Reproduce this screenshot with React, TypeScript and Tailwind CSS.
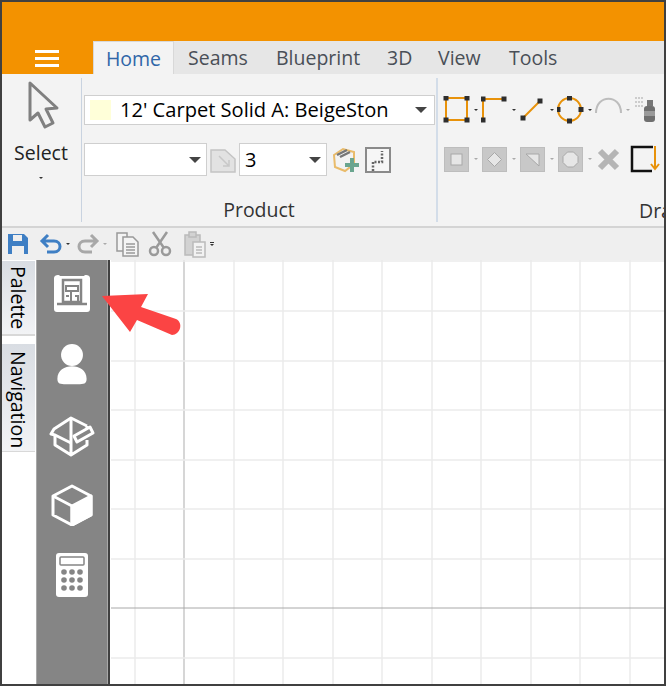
import React from 'react';

const TABS = ['Seams', 'Blueprint', '3D', 'View', 'Tools'];
const TAB_WIDTHS = ['w-[88px]', 'w-[111px]', 'w-[51px]', 'w-[71px]', 'w-[75px]'];

function Caret({ className = '' }: { className?: string }) {
  return <span className={`inline-block w-0 h-0 border-x-[6px] border-x-transparent border-t-[6px] border-t-[#444] ${className}`} />;
}

function TinyCaret({ light = false }: { light?: boolean }) {
  return <span className={`inline-block w-0 h-0 border-x-[2px] border-x-transparent border-t-[2px] ${light ? 'border-t-[#aaa]' : 'border-t-[#333]'}`} />;
}

function Handle({ x, y }: { x: number; y: number }) {
  return <rect x={x - 2.5} y={y - 2.5} width="5" height="5" fill="#2e2e2e" />;
}

function DrawIcon({ kind }: { kind: string }) {
  const line = { stroke: '#e8920a', strokeWidth: 2, fill: 'none' };
  return (
    <svg width="28" height="28" viewBox="0 0 28 28" className="shrink-0">
      {kind === 'square' && (
        <>
          <rect x="3" y="2" width="21" height="22" {...line} />
          <Handle x={3} y={2} /><Handle x={24} y={2} /><Handle x={3} y={24} /><Handle x={24} y={24} />
        </>
      )}
      {kind === 'corner' && (
        <>
          <path d="M2 24V3H23" {...line} />
          <Handle x={2} y={3} /><Handle x={23} y={3} /><Handle x={2} y={24} />
        </>
      )}
      {kind === 'line' && (
        <>
          <path d="M4 22L21 5" {...line} />
          <Handle x={4} y={22} /><Handle x={21} y={5} />
        </>
      )}
      {kind === 'circle' && (
        <>
          <circle cx="12.5" cy="13.5" r="11.5" {...line} />
          <Handle x={12.5} y={2} /><Handle x={12.5} y={25} /><Handle x={1} y={13.5} /><Handle x={24} y={13.5} />
        </>
      )}
      {kind === 'arc' && <path d="M1 17C1 -2 26 -2 26 17" stroke="#bdbdbd" strokeWidth="2" fill="none" />}
      {kind === 'spray' && (
        <>
          <path d="M2 2h8M2 6h8M2 10h8" stroke="#ccc" strokeWidth="2" strokeDasharray="2 1" />
          <rect x="14" y="4" width="6" height="6" fill="#777" />
          <rect x="11" y="10" width="11" height="16" rx="3" fill="#6f6f6f" />
          <rect x="11" y="15" width="11" height="5" fill="#9a9a9a" />
        </>
      )}
    </svg>
  );
}

function GreyIcon({ kind }: { kind: string }) {
  return (
    <div className="w-[25px] h-[25px] shrink-0 bg-[#c8c8c8] border border-[#bdbdbd] flex items-center justify-center">
      <svg width="17" height="17" viewBox="0 0 17 17" fill="#e6e6e6" stroke="#a8a8a8" strokeWidth="1">
        {kind === 'square' && <rect x="3" y="3" width="11" height="11" />}
        {kind === 'diamond' && <path d="M8.5 1.5L15.5 8.5L8.5 15.5L1.5 8.5Z" />}
        {kind === 'triangle' && <path d="M2 3H15V15Z" />}
        {kind === 'octagon' && <path d="M5.5 1H11.5L16 5.5V11.5L11.5 16H5.5L1 11.5V5.5Z" />}
      </svg>
    </div>
  );
}

function Grid() {
  const xs = [24, 73, 123, 172, 222, 271, 321, 370, 420, 469, 519];
  const ys = [1, 51, 101, 150, 200, 249, 299, 398];
  return (
    <svg className="absolute inset-0 w-full h-full">
      {xs.map((x, i) => (
        <line key={x} x1={x} x2={x} y1="0" y2="424" stroke={i === 1 ? '#c9c9c9' : '#ebebeb'} strokeWidth="1.5" />
      ))}
      {ys.map(y => (
        <line key={y} x1="0" x2="556" y1={y} y2={y} stroke="#ebebeb" strokeWidth="1.5" />
      ))}
      <line x1="0" x2="556" y1="348" y2="348" stroke="#a8a8a8" strokeWidth="1" />
    </svg>
  );
}

export default function App() {
  return (
    <div className="w-[666px] h-[686px] overflow-hidden border-2 border-[#404040] bg-white flex flex-col relative font-['Open_Sans','Noto_Sans',sans-serif] text-[#222]">
      {/* Title band + tabs */}
      <div className="h-[72px] bg-[#f39200] flex items-end shrink-0">
        <div className="w-[91px] h-[33px] flex justify-center items-start pt-[9px] pr-[2px]">
          <div className="w-[24px] flex flex-col gap-[4px]">
            <div className="h-[3px] bg-white" />
            <div className="h-[3px] bg-white" />
            <div className="h-[3px] bg-white" />
          </div>
        </div>
        <div className="w-[81px] h-[33px] bg-[#f3f3f3] border-t border-x border-[#d8d8d8] text-[#2f66a8] text-[19.5px] leading-[33px] text-center">Home</div>
        <div className="flex-1 h-[33px] bg-[#e6e6e6] flex text-[#4a4f57] text-[19.5px] leading-[33px] pl-[14px]">
          {TABS.map((t, i) => (
            <div key={t} className={TAB_WIDTHS[i]}>{t}</div>
          ))}
        </div>
      </div>

      {/* Ribbon */}
      <div className="h-[154px] bg-[#f3f3f3] border-b-2 border-[#d4d4d4] flex shrink-0">
        <div className="w-[80px] shrink-0 border-r border-[#c9d3e0] my-[4px] flex flex-col items-center pr-[1px]">
          <svg width="34" height="50" viewBox="0 0 34 50" className="mt-[2px] ml-[6px]">
            <path d="M3 3V40L11 33L18 47L26 43L19 29L30 28Z" fill="#f3f3f3" stroke="#808080" strokeWidth="3" strokeLinejoin="round" />
          </svg>
          <div className="text-[19.5px] leading-[26px] mt-[10px]">Select</div>
          <div className="mt-[11px] flex"><TinyCaret /></div>
        </div>

        <div className="w-[356px] shrink-0 border-r-2 border-[#d3dde9] my-[4px] flex flex-col pl-[2px]">
          <div className="w-[351px] h-[31px] mt-[17px] bg-white border border-[#cfcfcf] flex items-center pl-[5px] pr-[7px]">
            <div className="w-[21px] h-[20px] bg-[#ffffd9]" />
            <span className="ml-[9px] flex-1 text-[20.1px] leading-none text-black whitespace-nowrap">12' Carpet Solid A: BeigeSton</span>
            <Caret />
          </div>
          <div className="flex items-center mt-[18px] h-[33px]">
            <div className="w-[123px] h-[33px] bg-white border border-[#cfcfcf] flex items-center justify-end pr-[5px]">
              <Caret />
            </div>
            <svg width="28" height="28" viewBox="0 0 28 28" className="ml-[2px]">
              <path d="M2 4H16L26 13V26H2Z" fill="#e2e2e2" stroke="#c4c4c4" strokeWidth="1.5" />
              <path d="M10 10L20 20M20 14V20H14" stroke="#c8c8c8" strokeWidth="1.5" fill="none" />
            </svg>
            <div className="ml-[2px] w-[88px] h-[33px] bg-white border border-[#cfcfcf] flex items-center pl-[5px] pr-[5px] justify-between">
              <span className="text-[20px] text-black leading-none">3</span>
              <Caret />
            </div>
            <svg width="28" height="28" viewBox="0 0 28 28" className="ml-[5px]">
              <path d="M2 9L11 3L22 6V18L13 25L3 21Z" fill="none" stroke="#e9bb6a" strokeWidth="2" />
              <path d="M5 9L15 4M8 11L18 6" stroke="#777" strokeWidth="2.5" />
              <path d="M20 12V26M13 19H27" stroke="#6aa58f" strokeWidth="4" />
            </svg>
            <div className="ml-[5px] w-[26px] h-[26px] bg-[#f6f6f6] border-2 border-[#8a8a8a] flex">
              <svg width="22" height="22" viewBox="0 0 22 22">
                <path d="M6 22V13H15V2" stroke="#666" strokeWidth="2.5" strokeDasharray="2 1.5" fill="none" />
              </svg>
            </div>
          </div>
          <div className="text-[19.5px] leading-[24px] mt-[22px] text-center text-[#333] pr-[2px]">Product</div>
        </div>

        <div className="flex-1 min-w-0 flex flex-col pl-[5px] overflow-hidden">
          <div className="flex items-center h-[30px] mt-[21px] gap-[2px]">
            {['square', 'corner', 'line', 'circle', 'arc', 'spray'].map((k, i) => (
              <React.Fragment key={k}>
                <DrawIcon kind={k} />
                {i < 5 && <div className="w-[6px] shrink-0 flex justify-center"><TinyCaret light={k === 'arc'} /></div>}
              </React.Fragment>
            ))}
          </div>
          <div className="flex items-center h-[26px] mt-[21px] pl-[1px] gap-[2px]">
            {['square', 'diamond', 'triangle', 'octagon'].map(k => (
              <React.Fragment key={k}>
                <GreyIcon kind={k} />
                <div className="w-[9px] shrink-0 flex justify-center"><TinyCaret light /></div>
              </React.Fragment>
            ))}
            <svg width="25" height="25" viewBox="0 0 25 25" className="shrink-0">
              <path d="M4 4L21 21M21 4L4 21" stroke="#b5b5b5" strokeWidth="6" />
            </svg>
            <svg width="30" height="28" viewBox="0 0 30 28" className="shrink-0 ml-[7px]">
              <path d="M23 2H2V26H22" stroke="#111" strokeWidth="2.5" fill="none" />
              <path d="M25 1V23M21 19L25 24L29 19" stroke="#e8920a" strokeWidth="2" fill="none" />
            </svg>
          </div>
          <div className="text-[19.5px] leading-[24px] mt-[27px] pl-[196px] text-[#333] whitespace-nowrap">Draw</div>
        </div>
      </div>

      {/* Quick access toolbar */}
      <div className="h-[32px] bg-[#efefef] flex items-center shrink-0 pl-[5px]">
        <svg width="22" height="22" viewBox="0 0 22 22">
          <path d="M1 1H17L21 5V21H1Z" fill="#3f7fc4" />
          <rect x="6" y="2" width="9" height="6" fill="#efefef" />
          <rect x="5" y="13" width="12" height="8" fill="#efefef" />
        </svg>
        <svg width="24" height="22" viewBox="0 0 24 22" className="ml-[10px]" fill="none" stroke="#3f7fc4" strokeWidth="3">
          <path d="M9 2L3 8L9 14M3 8H15C23 8 23 19 15 19H8" />
        </svg>
        <div className="ml-[3px] flex"><TinyCaret /></div>
        <svg width="24" height="22" viewBox="0 0 24 22" className="ml-[6px]" fill="none" stroke="#a8a8a8" strokeWidth="3">
          <path d="M15 2L21 8L15 14M21 8H9C1 8 1 19 9 19H16" />
        </svg>
        <div className="ml-[3px] flex"><TinyCaret light /></div>
        <svg width="26" height="26" viewBox="0 0 26 26" className="ml-[8px]" fill="#f4f4f4" stroke="#999" strokeWidth="1.5">
          <path d="M2 2H12V20H2Z" />
          <path d="M8 6H18L23 11V25H8Z" />
          <path d="M11 13H20M11 16H20M11 19H20M11 22H20" />
        </svg>
        <svg width="24" height="26" viewBox="0 0 24 26" className="ml-[7px]" fill="none" stroke="#9a9a9a" strokeWidth="2.5">
          <path d="M5 1L16 17M19 1L8 17" />
          <circle cx="6" cy="20" r="4" />
          <circle cx="18" cy="20" r="4" />
        </svg>
        <svg width="24" height="28" viewBox="0 0 24 28" className="ml-[11px]" fill="#d2d2d2" stroke="#bbb" strokeWidth="1.5">
          <path d="M2 5H17V25H2Z" />
          <rect x="6" y="2" width="7" height="5" />
          <path d="M10 12H22V27H10Z" fill="#f2f2f2" />
          <path d="M13 17H19M13 20H19M13 23H19" />
        </svg>
        <div className="ml-[3px] flex flex-col gap-[1px] items-center">
          <div className="w-[4px] h-[1px] bg-[#333]" />
          <TinyCaret />
        </div>
      </div>

      {/* Main */}
      <div className="flex-1 flex min-h-0">
        <div className="w-[34px] bg-white shrink-0 flex flex-col pt-[1px]">
          <div className="w-[33px] h-[75px] bg-gradient-to-b from-[#d9dde3] to-[#f2f3f5] border-b-2 border-[#d8d8d8] text-[19.5px] text-black flex items-center justify-center [writing-mode:vertical-rl]">Palette</div>
          <div className="w-[33px] h-[108px] mt-[8px] pt-[5px] bg-gradient-to-b from-[#d9dde3] to-[#f2f3f5] border-b border-[#d8d8d8] text-[19.5px] text-black flex items-center justify-center [writing-mode:vertical-rl]">Navigation</div>
        </div>

        <div className="w-[72px] bg-[#858585] border-x border-[#a8a8a8] shrink-0 flex flex-col items-center pt-[14px]">
          <svg width="38" height="38" viewBox="0 0 38 38" className="mb-[32px] shrink-0">
            <path d="M1 4C1 1 6 0 7 2H31C32 0 37 1 37 4V35C37 37 36 38 34 38H4C2 38 1 37 1 35Z" fill="#fff" />
            <path d="M10 6H28V28H10Z" fill="none" stroke="#858585" strokeWidth="2.5" />
            <path d="M13 12H25V17H13ZM18 17V27M13 22H16M22 22H25V27" fill="none" stroke="#858585" strokeWidth="2" />
            <path d="M4 30H34" stroke="#858585" strokeWidth="2.5" />
          </svg>
          <svg width="32" height="42" viewBox="0 0 34 46" className="mb-[30px] shrink-0">
            <circle cx="17" cy="12" r="12" fill="#fff" />
            <path d="M1 38C1 20 33 20 33 38C33 45 28 44 17 44C6 44 1 45 1 38Z" fill="#fff" />
          </svg>
          <svg width="46" height="42" viewBox="0 0 46 42" className="mb-[26px] shrink-0" fill="none" stroke="#fff" strokeWidth="3" strokeLinejoin="round">
            <path d="M22 2V39M6 19V29L22 39L38 29V24" />
            <path d="M38 10L22 2L5 13L2 18L6 19L22 27" />
            <path d="M38 10V12" />
            <path d="M25 20L41 11L44 17L28 26Z" />
          </svg>
          <svg width="42" height="42" viewBox="0 0 42 42" className="mb-[27px] shrink-0" fill="none" stroke="#fff" strokeWidth="3" strokeLinejoin="round">
            <path d="M21 2L40 12V31L21 41L2 31V12Z" />
            <path d="M2 12L21 22V41" />
            <path d="M21 22L40 12V31L21 41Z" fill="#fff" />
          </svg>
          <svg width="32" height="44" viewBox="0 0 32 44" className="shrink-0">
            <rect width="32" height="44" rx="3" fill="#fff" />
            <rect x="4" y="4" width="24" height="8" rx="1" fill="none" stroke="#858585" strokeWidth="1.5" />
            {[5, 13, 21].flatMap(cy => [8, 16, 24].map(cx => (
              <circle key={`${cx}-${cy}`} cx={cx} cy={cy + 14} r="2.8" fill="#858585" />
            )))}
          </svg>
        </div>

        <div className="w-[2px] bg-[#404040] shrink-0" />
        <div className="flex-1 relative bg-white border-l border-white">
          <Grid />
        </div>
      </div>

      {/* Annotation arrow */}
      <svg className="absolute left-[-2px] top-[-2px] pointer-events-none" width="666" height="686">
        <path d="M102 296L148 294L141 307L176 319C184 323 180 335 172 335L137 320L130 332Z" fill="#fb4444" />
      </svg>
    </div>
  );
}
